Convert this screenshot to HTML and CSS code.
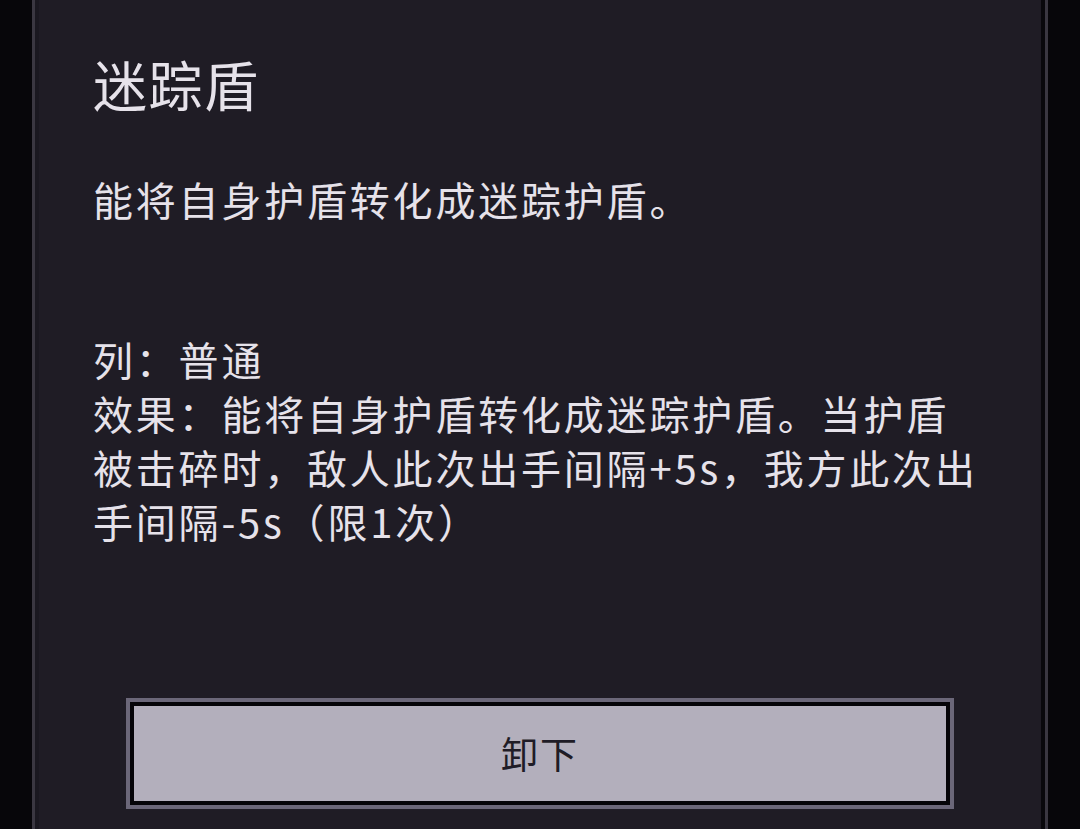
FILE: index.html
```html
<!DOCTYPE html>
<html>
<head lang="zh">
    <meta charset="UTF-8">
    <title>迷踪盾</title>
    <link rel="stylesheet" href="styles.css">
</head>
<body>
<div class="frame">
    <div class="panel">
        <h1 class="title">迷踪盾</h1>
        <p class="desc">能将自身护盾转化成迷踪护盾。</p>
        <p class="detail">
            列：普通<br>
            效果：能将自身护盾转化成迷踪护盾。当护盾<br>
            被击碎时，敌人此次出手间隔+5s，我方此次出<br>
            手间隔-5s（限1次）
        </p>
        <div class="btn-wrap">
            <div class="btn">卸下</div>
        </div>
    </div>
</div>
</body>
</html>
```

FILE: styles.css
```css
* {
    margin: 0;
    padding: 0;
}

html, body {
    height: 100%;
}

body {
    background-color: #07060a;
    font-family: "Noto Sans CJK SC", "Noto Sans", sans-serif;
    overflow: hidden;
}

.frame {
    height: 100%;
    margin: 0 32px;
    border-left: 3px solid #3a3741;
    border-right: 3px solid #3a3741;
    display: flex;
}

.panel {
    flex: 1;
    background-color: #1f1c25;
    border-left: 4px solid #1a1820;
    border-right: 4px solid #09080c;
    padding: 53px 0 0 54px;
    color: #e6e2ea;
}

.title {
    font-size: 54px;
    font-weight: normal;
    line-height: 62px;
    letter-spacing: 1.5px;
}

.desc {
    margin-top: 57px;
    font-size: 40px;
    line-height: 54px;
    letter-spacing: 2.8px;
}

.detail {
    margin-top: 106px;
    font-size: 40px;
    line-height: 54px;
    letter-spacing: 2.8px;
    white-space: nowrap;
}

.btn-wrap {
    margin: 150px 0 0 33px;
    width: 820px;
    border: 4px solid #6b6779;
}

.btn {
    height: 95px;
    border: 4px solid #050408;
    background-color: #b3afbc;
    color: #1f1c26;
    font-size: 37px;
    line-height: 95px;
    text-align: center;
    letter-spacing: 2px;
}
```
